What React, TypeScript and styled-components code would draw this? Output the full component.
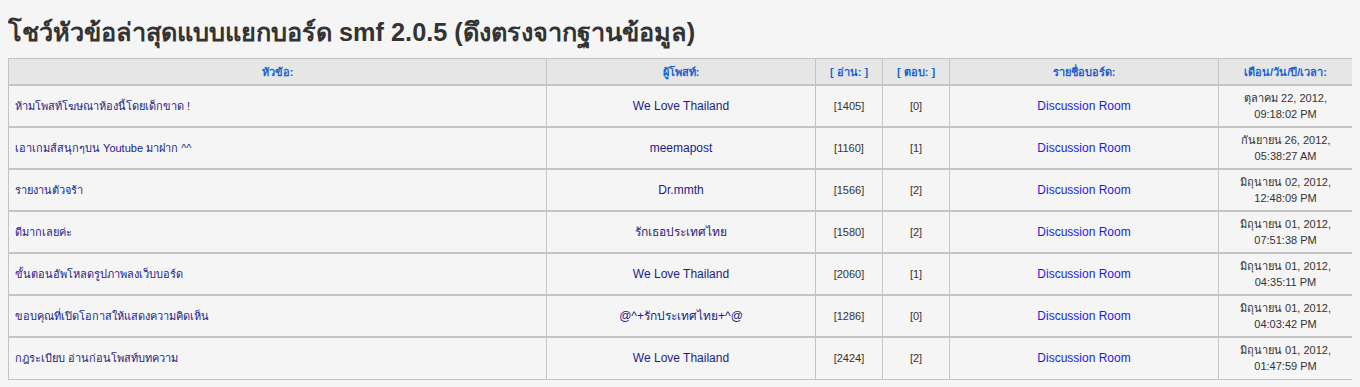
import React from "react"
import styled, { createGlobalStyle } from "styled-components"

interface Topic {
  subject: string
  poster: string
  views: number
  replies: number
  board: string
  date: string
  time: string
}

const topics: Topic[] = [
  { subject: "ห้ามโพสท์โฆษณาห้องนี้โดยเด็กขาด !", poster: "We Love Thailand", views: 1405, replies: 0, board: "Discussion Room", date: "ตุลาคม 22, 2012,", time: "09:18:02 PM" },
  { subject: "เอาเกมส์สนุกๆบน Youtube มาฝาก ^^", poster: "meemapost", views: 1160, replies: 1, board: "Discussion Room", date: "กันยายน 26, 2012,", time: "05:38:27 AM" },
  { subject: "รายงานตัวจร้า", poster: "Dr.mmth", views: 1566, replies: 2, board: "Discussion Room", date: "มิถุนายน 02, 2012,", time: "12:48:09 PM" },
  { subject: "ดีมากเลยค่ะ", poster: "รักเธอประเทศไทย", views: 1580, replies: 2, board: "Discussion Room", date: "มิถุนายน 01, 2012,", time: "07:51:38 PM" },
  { subject: "ขั้นตอนอัพโหลดรูปภาพลงเว็บบอร์ด", poster: "We Love Thailand", views: 2060, replies: 1, board: "Discussion Room", date: "มิถุนายน 01, 2012,", time: "04:35:11 PM" },
  { subject: "ขอบคุณที่เปิดโอกาสให้แสดงความคิดเห็น", poster: "@^+รักประเทศไทย+^@", views: 1286, replies: 0, board: "Discussion Room", date: "มิถุนายน 01, 2012,", time: "04:03:42 PM" },
  { subject: "กฎระเบียบ อ่านก่อนโพสท์บทความ", poster: "We Love Thailand", views: 2424, replies: 2, board: "Discussion Room", date: "มิถุนายน 01, 2012,", time: "01:47:59 PM" },
]

const columns = [
  { label: "หัวข้อ:", width: 538 },
  { label: "ผู้โพสท์:", width: 269 },
  { label: "[ อ่าน: ]", width: 67 },
  { label: "[ ตอบ: ]", width: 67 },
  { label: "รายชื่อบอร์ด:", width: 269 },
  { label: "เดือน/วัน/ปี/เวลา:", width: 134 },
]

const GlobalStyle = createGlobalStyle`
  body {
    margin: 8px;
    background: #f5f5f5;
    font-family: "Liberation Sans", "Noto Sans", sans-serif;
  }
`

const Title = styled.h1`
  margin: 9px 0 11px;
  font-size: 25.3px;
  line-height: 30px;
  font-weight: bold;
  color: #333;
  font-family: "Liberation Sans", "Noto Sans", sans-serif;
`

const Table = styled.table`
  width: 1344px;
  border-collapse: collapse;
  table-layout: fixed;
  background: #f5f5f5;
`

const HeadCell = styled.th`
  height: 25px;
  padding: 0;
  background: #e6e6e6;
  border: 1px solid #c4c4c4;
  color: #1b62d1;
  font-size: 11px;
  font-weight: bold;
  text-align: center;
  vertical-align: middle;
`

const Row = styled.tr`
  height: 42px;
`

const Cell = styled.td<{ $align?: "left" | "center"; $color?: string; $size?: number }>`
  padding: 0 6px;
  border: 1px solid #c4c4c4;
  border-top: 2px solid #c4c4c4;
  text-align: ${({ $align }) => $align || "center"};
  color: ${({ $color }) => $color || "#333"};
  font-size: ${({ $size }) => $size || 11}px;
  line-height: 16px;
  vertical-align: middle;
`

const TopicLink = styled.span`
  color: #1c1c8a;
  font-size: 11px;
`

const DateLine = styled.span`
  display: block;
  font-size: 11px;
  line-height: 16px;
  color: #333;
`

export default function App() {
  return (
    <>
      <GlobalStyle />
      <Title>โชว์หัวข้อล่าสุดแบบแยกบอร์ด smf 2.0.5 (ดึงตรงจากฐานข้อมูล)</Title>
      <Table>
        <colgroup>
          {columns.map((c, i) => (
            <col key={i} style={{ width: c.width }} />
          ))}
        </colgroup>
        <thead>
          <tr>
            {columns.map((c, i) => (
              <HeadCell key={i}>{c.label}</HeadCell>
            ))}
          </tr>
        </thead>
        <tbody>
          {topics.map((t, i) => (
            <Row key={i}>
              <Cell $align="left">
                <TopicLink>{t.subject}</TopicLink>
              </Cell>
              <Cell $color="#1c1c8a" $size={12}>{t.poster}</Cell>
              <Cell>[{t.views}]</Cell>
              <Cell>[{t.replies}]</Cell>
              <Cell $color="#1a1aee" $size={12}>{t.board}</Cell>
              <Cell>
                <DateLine>{t.date}</DateLine>
                <DateLine>{t.time}</DateLine>
              </Cell>
            </Row>
          ))}
        </tbody>
      </Table>
    </>
  )
}
